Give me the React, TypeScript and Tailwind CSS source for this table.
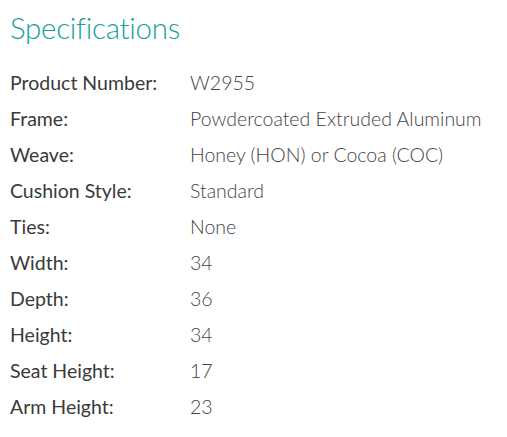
const specs: [string, string][] = [
  ["Product Number:", "W2955"],
  ["Frame:", "Powdercoated Extruded Aluminum"],
  ["Weave:", "Honey (HON) or Cocoa (COC)"],
  ["Cushion Style:", "Standard"],
  ["Ties:", "None"],
  ["Width:", "34"],
  ["Depth:", "36"],
  ["Height:", "34"],
  ["Seat Height:", "17"],
  ["Arm Height:", "23"],
];

export default function App() {
  return (
    <div className="w-[507px] h-[437px] bg-white px-[10px] pt-[9px] font-['Lato',sans-serif]">
      <h2 className="text-[29.5px] font-light leading-[38px] tracking-[-0.3px] text-[#149f99]">Specifications</h2>
      <div className="mt-[18px] flex flex-col">
        {specs.map(([label, value]) => (
          <div key={label} className="flex h-[36px] items-center text-[19.5px]">
            <span className="w-[180px] text-[#3a3a3a]">{label}</span>
            <span className="font-light text-[#444444]">{value}</span>
          </div>
        ))}
      </div>
    </div>
  );
}
